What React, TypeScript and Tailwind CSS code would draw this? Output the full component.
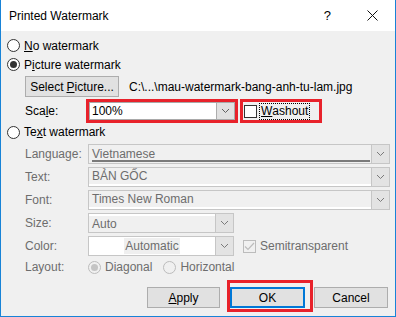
import React from "react";

function Radio({ checked, disabled }: { checked?: boolean; disabled?: boolean }) {
  return (
    <span
      className={
        disabled
          ? "flex h-[13px] w-[13px] shrink-0 items-center justify-center rounded-full border border-[#bcbcbc] bg-[#f0f0f0]"
          : "flex h-[13px] w-[13px] shrink-0 items-center justify-center rounded-full border border-[#333333] bg-white"
      }
    >
      {checked && (
        <span className={disabled ? "h-[7px] w-[7px] rounded-full bg-[#c4c4c4]" : "h-[7px] w-[7px] rounded-full bg-[#333333]"} />
      )}
    </span>
  );
}

function Chevron({ disabled }: { disabled?: boolean }) {
  return (
    <svg width="9" height="6" viewBox="0 0 9 6">
      <path d="M1 1 L4.5 4.5 L8 1" fill="none" stroke={disabled ? "#7a7a7a" : "#606060"} strokeWidth="1" />
    </svg>
  );
}

function DropBtn({ disabled }: { disabled?: boolean }) {
  return (
    <div
      className={
        disabled
          ? "flex h-full w-[18px] items-center justify-center border-l border-[#c6c6c6] bg-[#e3e3e3]"
          : "flex h-full w-[18px] items-center justify-center border-l border-[#adadad] bg-[#e1e1e1]"
      }
    >
      <Chevron disabled={disabled} />
    </div>
  );
}

function Label({ children }: { children: React.ReactNode }) {
  return <span className="w-[63px] shrink-0 text-[#6d6d6d]">{children}</span>;
}

export default function App() {
  return (
    <div className="flex h-[317px] w-[396px] flex-col border-x border-b border-[#1883d7] bg-[#f0f0f0] font-['Liberation_Sans',Arial,sans-serif] text-[12px] leading-none text-black">
      <div className="flex h-[31px] shrink-0 items-center bg-white pl-[8px]">
        <span>Printed Watermark</span>
        <span className="ml-auto text-[13px]">?</span>
        <svg className="ml-[36px] mr-[17px]" width="11" height="11" viewBox="0 0 11 11">
          <path d="M0.5 0.5 L10.5 10.5 M10.5 0.5 L0.5 10.5" stroke="#111" strokeWidth="1" />
        </svg>
      </div>

      <div className="flex flex-col pl-[6px] pt-[5px]">
        <div className="flex h-[19px] items-center gap-[4px]">
          <Radio />
          <span>
            <span className="underline">N</span>o watermark
          </span>
        </div>
        <div className="flex h-[19px] items-center gap-[4px]">
          <Radio checked />
          <span>
            P<span className="underline">i</span>cture watermark
          </span>
        </div>

        <div className="mt-[2px] flex h-[21px] items-center">
          <button className="ml-[18px] flex h-[21px] w-[94px] items-center justify-center border border-[#adadad] bg-[#e1e1e1]">
            Select <span className="ml-[3px] underline">P</span>icture...
          </button>
          <span className="ml-[10px]">C:\...\mau-watermark-bang-anh-tu-lam.jpg</span>
        </div>

        <div className="mt-[2px] flex h-[24px] items-center">
          <span className="ml-[18px] w-[61px]">
            Sca<span className="underline">l</span>e:
          </span>
          <div className="flex h-[24px] w-[152px] items-center border-[3px] border-[#e8222b]">
            <div className="flex h-[18px] w-full items-center border border-[#a9a9a9] bg-white">
              <span className="flex-1 pl-[2px]">100%</span>
              <DropBtn />
            </div>
          </div>
          <div className="ml-[2px] flex h-[24px] w-[82px] items-center border-[3px] border-[#e8222b] pl-[1px]">
            <span className="h-[13px] w-[13px] border border-[#333333] bg-white" />
            <span className="ml-[2px] flex h-[17px] items-center border border-dotted border-black px-[1px]">
              <span className="underline">W</span>ashout
            </span>
          </div>
        </div>

        <div className="flex h-[18px] items-center gap-[4px]">
          <Radio />
          <span>
            Te<span className="underline">x</span>t watermark
          </span>
        </div>

        <div className="mt-[3px] flex flex-col gap-[3px] pl-[18px] text-[#6d6d6d]">
          <div className="flex h-[20px] items-center">
            <Label>Language:</Label>
            <div className="flex h-[20px] w-[302px] border border-[#c6c6c6] bg-[#f0f0f0]">
              <div className="flex flex-1 flex-col pl-[3px] pt-[3px]">
                <span>Vietnamese</span>
                <div className="mt-auto mb-[1px] mr-[1px] h-[3px] border-y border-[#7a7a7a]" />
              </div>
              <DropBtn disabled />
            </div>
          </div>
          <div className="flex h-[20px] items-center">
            <Label>Text:</Label>
            <div className="flex h-[20px] w-[302px] border border-[#c6c6c6] bg-[#f0f0f0]">
              <span className="flex flex-1 items-center border-b-2 border-white pl-[3px]">BẢN GỐC</span>
              <DropBtn disabled />
            </div>
          </div>
          <div className="flex h-[20px] items-center">
            <Label>Font:</Label>
            <div className="flex h-[20px] w-[302px] border border-[#c6c6c6] bg-[#f0f0f0]">
              <span className="flex flex-1 items-center border-b-2 border-white pl-[3px]">Times New Roman</span>
              <DropBtn disabled />
            </div>
          </div>
          <div className="flex h-[20px] items-center">
            <Label>Size:</Label>
            <div className="flex h-[20px] w-[146px] border border-[#c6c6c6] bg-[#f0f0f0]">
              <span className="flex flex-1 items-center border-t-2 border-white pl-[3px]">Auto</span>
              <DropBtn disabled />
            </div>
          </div>
          <div className="flex h-[20px] items-center">
            <Label>Color:</Label>
            <div className="flex h-[20px] w-[146px] border border-[#c6c6c6] bg-white">
              <span className="flex flex-1 items-center justify-center">
                <span className="bg-[#efefef] px-[1px] py-[2px]">Automatic</span>
              </span>
              <DropBtn disabled />
            </div>
            <span className="ml-[9px] flex h-[13px] w-[13px] items-center justify-center border border-[#bcbcbc] bg-[#f0f0f0]">
              <svg width="11" height="9" viewBox="0 0 11 9">
                <path d="M1 4.5 L4 7.5 L10 1" fill="none" stroke="#bcbcbc" strokeWidth="1.2" />
              </svg>
            </span>
            <span className="ml-[4px]">Semitransparent</span>
          </div>
          <div className="flex h-[16px] items-center">
            <Label>Layout:</Label>
            <Radio checked disabled />
            <span className="ml-[4px]">Diagonal</span>
            <span className="ml-[11px]">
              <Radio disabled />
            </span>
            <span className="ml-[4px]">Horizontal</span>
          </div>
        </div>

        <div className="mt-[5px] flex h-[32px] items-start pl-[140px]">
          <button className="mt-[7px] flex h-[21px] w-[73px] items-center justify-center border border-[#adadad] bg-[#e1e1e1]">
            <span className="underline">A</span>pply
          </button>
          <div className="ml-[7px] h-[32px] w-[86px] border-[3px] border-[#e8222b] pt-[4px]">
            <button className="flex h-[21px] w-[75px] items-center justify-center border-2 border-[#0078d7] bg-[#e1e1e1]">
              OK
            </button>
          </div>
          <button className="ml-[1px] mt-[7px] flex h-[21px] w-[74px] items-center justify-center border border-[#adadad] bg-[#e1e1e1]">
            Cancel
          </button>
        </div>
      </div>
    </div>
  );
}
